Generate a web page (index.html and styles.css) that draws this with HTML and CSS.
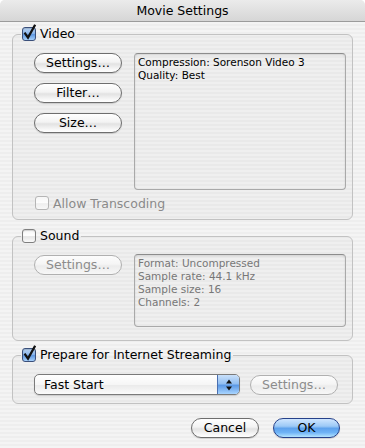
FILE: index.html
```html
<!DOCTYPE html>
<html>
<head>
<meta charset="utf-8">
<link rel="stylesheet" href="styles.css">
</head>
<body>
<div class="window">
  <div class="titlebar">Movie Settings</div>
  <div class="content">
    <fieldset class="group">
      <legend class="legend"><span class="cb on"><svg viewBox="0 0 14 14" class="tick"><path d="M3.2 6.6 L6 10.6 L12.6 -1.2" /></svg></span><span class="lbl">Video</span></legend>
      <div class="inner">
        <div class="row">
          <div class="btncol">
            <div class="btn">Settings…</div>
            <div class="btn">Filter…</div>
            <div class="btn">Size…</div>
          </div>
          <div class="info video-info">Compression: Sorenson Video 3<br>Quality: Best</div>
        </div>
        <div class="sub"><span class="cb dis"></span><span class="lbl grey">Allow Transcoding</span></div>
      </div>
    </fieldset>

    <fieldset class="group sound">
      <legend class="legend"><span class="cb"></span><span class="lbl">Sound</span></legend>
      <div class="inner">
        <div class="row">
          <div class="btncol">
            <div class="btn dis">Settings…</div>
          </div>
          <div class="info sound-info grey">Format: Uncompressed<br>Sample rate: 44.1 kHz<br>Sample size: 16<br>Channels: 2</div>
        </div>
      </div>
    </fieldset>

    <fieldset class="group stream">
      <legend class="legend"><span class="cb on"><svg viewBox="0 0 14 14" class="tick"><path d="M3.2 6.6 L6 10.6 L12.6 -1.2" /></svg></span><span class="lbl">Prepare for Internet Streaming</span></legend>
      <div class="inner">
        <div class="prow">
          <div class="popup">
            <span class="ptext">Fast Start</span>
            <span class="parrows"><svg viewBox="0 0 8 12" width="8" height="12"><path d="M4 0.5 L7 4.5 L1 4.5 Z M4 11.5 L7 7.5 L1 7.5 Z" fill="#111"/></svg></span>
          </div>
          <div class="btn dis">Settings…</div>
        </div>
      </div>
    </fieldset>

    <div class="footer">
      <div class="btn cancel">Cancel</div>
      <div class="btn ok">OK</div>
    </div>
  </div>
</div>
</body>
</html>
```

FILE: styles.css
```css
html, body {
  margin: 0;
  padding: 0;
  background: #ffffff;
}
.window {
  width: 365px;
  height: 448px;
  overflow: hidden;
  border-radius: 5px 5px 0 0;
  background: repeating-linear-gradient(to bottom, #eeeeee 0, #eeeeee 2px, #f4f4f4 2px, #f4f4f4 4px);
  font-family: "Lucida Grande", "DejaVu Sans", sans-serif;
  font-size: 12px;
  color: #000;
}
.titlebar {
  height: 21px;
  line-height: 21px;
  text-align: center;
  font-size: 12.5px;
  background: linear-gradient(to bottom, #ebebeb, #d6d6d6);
  border-bottom: 1px solid #9c9c9c;
}
.content {
  padding: 4px 12px 0 12px;
}
.group {
  margin: 0;
  padding: 0 6px 8px 8px;
  border: 1px solid #c2c2c2;
  border-radius: 6px;
  background: rgba(0, 0, 0, 0.018);
  min-width: 0;
}
.group.sound {
  margin-top: 8px;
  padding-bottom: 13px;
}
.group.stream {
  margin-top: 6px;
}
.legend {
  margin: 0;
  padding: 0 2px 0 1px;
  height: 16px;
  line-height: 16px;
  display: flex;
  align-items: center;
}
.cb {
  position: relative;
  display: inline-block;
  box-sizing: border-box;
  width: 14px;
  height: 14px;
  border: 1px solid #7f7f7f;
  border-radius: 3px;
  background: linear-gradient(to bottom, #f4f4f4 0%, #ffffff 45%, #e6e6e6 55%, #fafafa 100%);
  box-shadow: inset 0 1px 1px rgba(0,0,0,0.15);
  flex: none;
}
.cb.on {
  border-color: #3a4f7a;
  background: linear-gradient(to bottom, #b9d3f2 0%, #8cb6ea 45%, #5f97df 55%, #a6d0fb 100%);
}
.cb.dis {
  border-color: #b5b5b5;
  background: linear-gradient(to bottom, #f6f6f6, #fdfdfd 50%, #eeeeee 55%, #f8f8f8);
  box-shadow: none;
}
.tick {
  position: absolute;
  left: -1px;
  top: -1px;
  width: 14px;
  height: 14px;
  overflow: visible;
}
.tick path {
  fill: none;
  stroke: #111;
  stroke-width: 2.3;
  stroke-linecap: square;
  stroke-linejoin: miter;
}
.lbl {
  margin-left: 4px;
  font-size: 12.5px;
  white-space: nowrap;
}
.grey {
  color: #8a8a8a;
}
.inner {
  padding: 11px 0 0 13px;
}
.row {
  display: flex;
  gap: 12px;
  align-items: flex-start;
}
.btncol {
  display: flex;
  flex-direction: column;
  gap: 10px;
}
.btn {
  box-sizing: border-box;
  width: 88px;
  height: 20px;
  line-height: 18px;
  text-align: center;
  font-size: 12.5px;
  border: 1px solid #6e6e6e;
  border-radius: 10px;
  background: linear-gradient(to bottom, #ffffff 0%, #f3f3f3 45%, #e2e2e2 55%, #f7f7f7 85%, #ffffff 100%);
  box-shadow: 0 1px 1px rgba(0,0,0,0.15);
  white-space: nowrap;
}
.btn.dis {
  color: #8c8c8c;
  border-color: #b0b0b0;
  background: linear-gradient(to bottom, #fcfcfc 0%, #f5f5f5 45%, #ececec 55%, #f7f7f7 100%);
  box-shadow: none;
}
.info {
  box-sizing: border-box;
  width: 212px;
  padding: 2px 3px;
  font-size: 10.5px;
  line-height: 13px;
  border: 1px solid #a9a9a9;
  border-top-color: #8c8c8c;
  border-radius: 4px;
  box-shadow: inset 0 1px 2px rgba(0,0,0,0.12);
}
.video-info {
  height: 137px;
}
.sound-info {
  height: 73px;
  margin-top: -1px;
  color: #777;
}
.sub {
  display: flex;
  align-items: center;
  height: 16px;
  margin: 5px 0 0 1px;
}
.prow {
  display: flex;
  align-items: center;
  gap: 10px;
  padding-top: 0;
}
.popup {
  box-sizing: border-box;
  width: 206px;
  height: 21px;
  display: flex;
  border: 1px solid #7a7a7a;
  border-radius: 5px;
  overflow: hidden;
  background: linear-gradient(to bottom, #ffffff 0%, #f6f6f6 50%, #ebebeb 55%, #fbfbfb 100%);
  box-shadow: 0 1px 1px rgba(0,0,0,0.15);
}
.ptext {
  flex: 1;
  padding-left: 9px;
  line-height: 19px;
  font-size: 12.5px;
}
.parrows {
  width: 21px;
  display: flex;
  align-items: center;
  justify-content: center;
  border-left: 1px solid #4a6fb0;
  background: linear-gradient(to bottom, #c9e0fa 0%, #94c0f2 45%, #5d9ae6 55%, #a9d5ff 100%);
}
.footer {
  display: flex;
  justify-content: flex-end;
  gap: 14px;
  margin-top: 14px;
  padding-right: 13px;
}
.btn.cancel {
  width: 68px;
}
.btn.ok {
  width: 67px;
  border-color: #26418a;
  background: linear-gradient(to bottom, #cfe6ff 0%, #9cc9f6 40%, #5ea2ec 52%, #6fb3f6 75%, #b4e4ff 100%);
}
```
